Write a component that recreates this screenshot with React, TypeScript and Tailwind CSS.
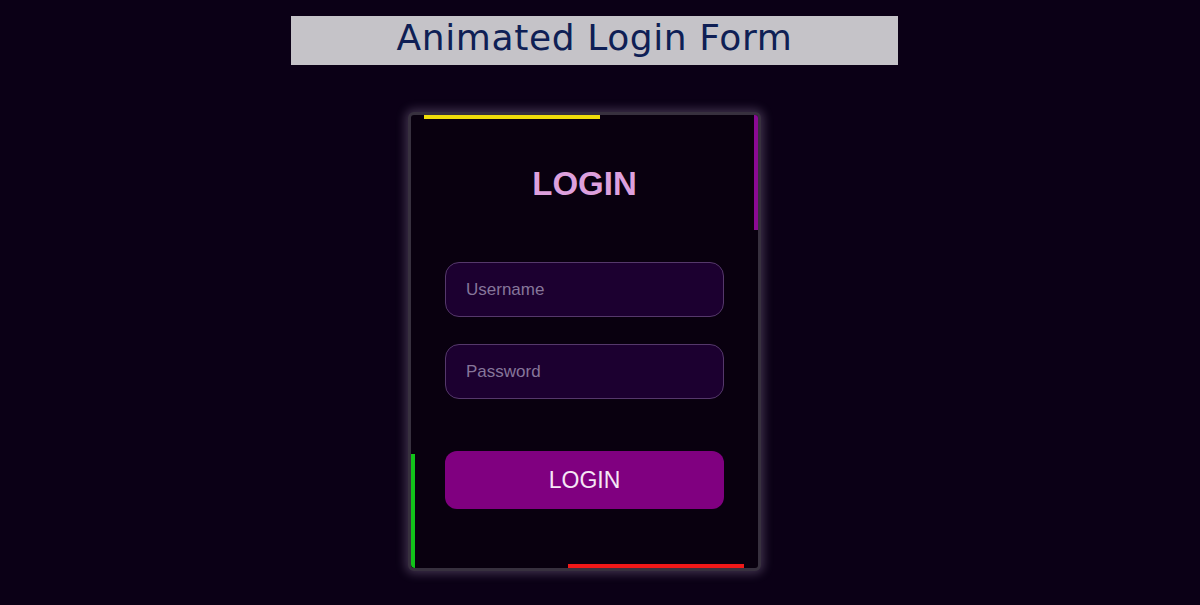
export default function App() {
  return (
    <div className="min-h-[605px] w-full bg-[#0b0016] pt-4 font-['Liberation_Sans',Arial,sans-serif]">
      <div className="ml-[291px] flex h-[49px] w-[607px] items-center justify-center bg-[#c5c3c8] pb-[5px]">
        <h1 className="font-['DejaVu_Sans',Verdana,sans-serif] text-[36px] leading-none tracking-[0.6px] text-[#0f1f55]">
          Animated Login Form
        </h1>
      </div>

      <div className="relative ml-[408px] mt-[47px] h-[459px] w-[353px] overflow-hidden rounded-md border-[3px] border-[#37303e] bg-[#09000f] shadow-[0_0_10px_3px_rgba(190,170,210,0.28)]">
        {/* running border lines */}
        <span className="absolute left-[13px] top-0 h-[4px] w-[176px] bg-[#f0dd0a]" />
        <span className="absolute right-0 top-0 h-[115px] w-[4px] bg-[#8a0a95]" />
        <span className="absolute bottom-0 left-0 h-[114px] w-[4px] rounded-bl bg-[#12c21a]" />
        <span className="absolute bottom-0 left-[157px] h-[4px] w-[176px] bg-[#f01818]" />

        <div className="flex flex-col items-center pt-[52px]">
          <h2 className="text-[33px] font-bold leading-none text-[#dda0dd]">LOGIN</h2>

          <div className="mt-[62px] flex w-[279px] flex-col gap-[27px]">
            <input
              placeholder="Username"
              className="h-[55px] rounded-[14px] border border-[#55386b] bg-[#1c0030] px-5 text-[17px] text-white outline-none placeholder:text-[#86769a]"
            />
            <input
              placeholder="Password"
              type="password"
              className="h-[55px] rounded-[14px] border border-[#55386b] bg-[#1c0030] px-5 text-[17px] text-white outline-none placeholder:text-[#86769a]"
            />
          </div>

          <button className="mt-[52px] h-[58px] w-[279px] rounded-[12px] bg-[#800080] text-[23px] text-[#f6e6f6]">
            LOGIN
          </button>
        </div>
      </div>
    </div>
  );
}
